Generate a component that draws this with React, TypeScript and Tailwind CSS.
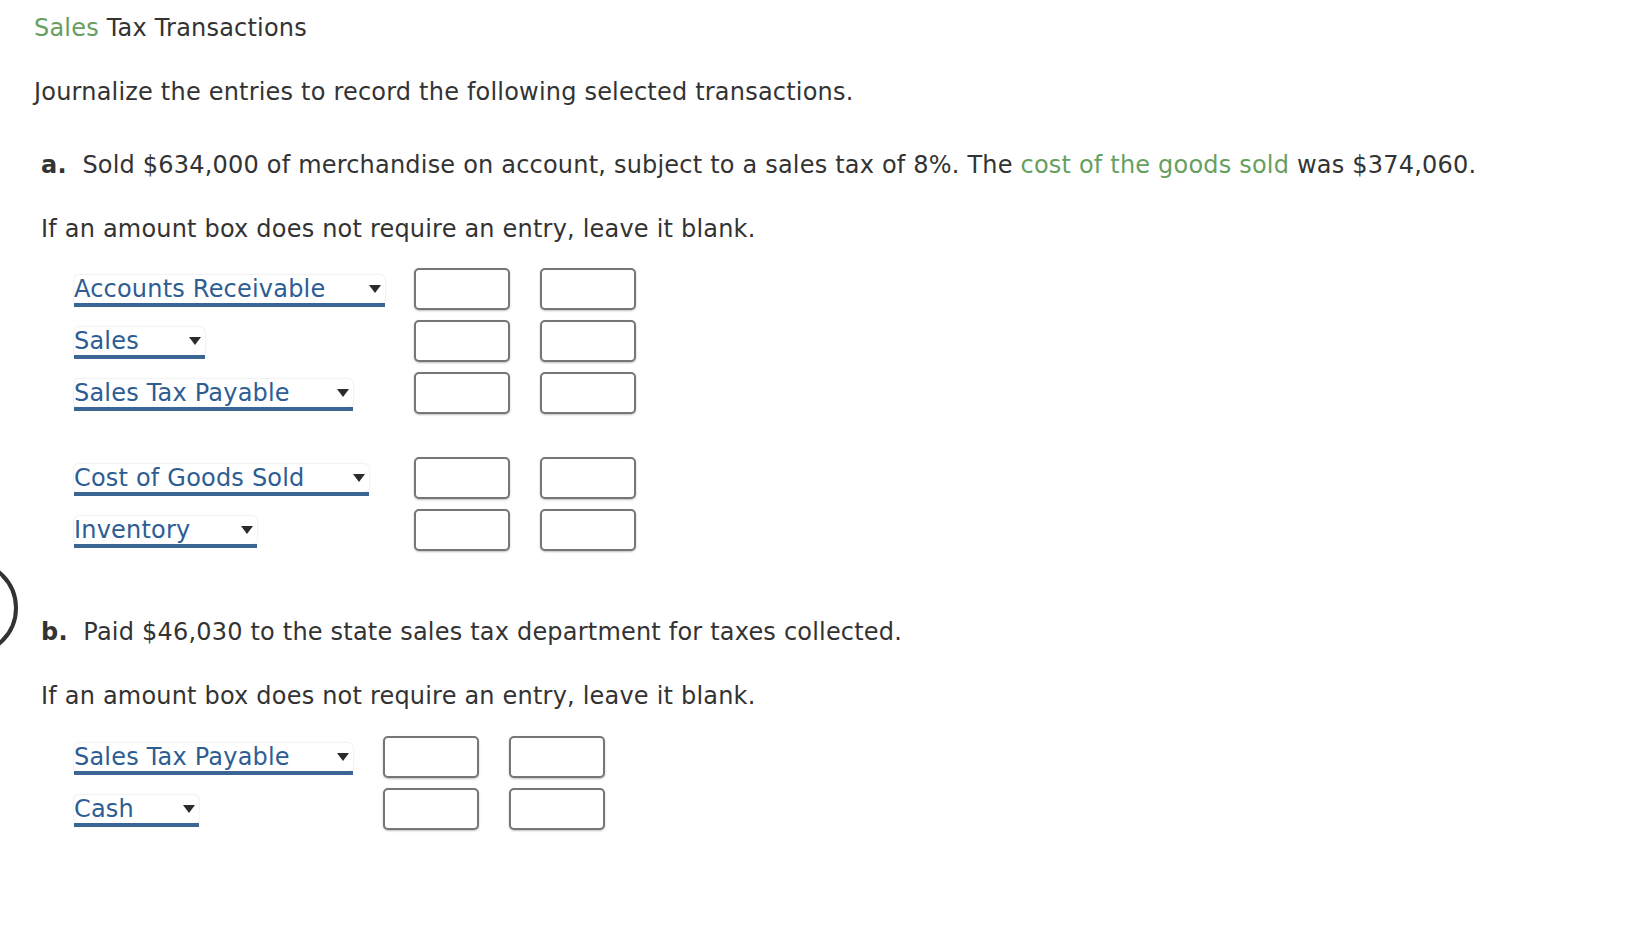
import React from "react";

const font = { fontFamily: '"DejaVu Sans", Verdana, sans-serif' };

function AccountSelect({ label, width }: { label: string; width: number }) {
  return (
    <div className="relative flex flex-col" style={{ width }}>
      <div className="flex h-[28px] items-center justify-between rounded-[5px] bg-white pr-[4px] shadow-[0_0_2px_rgba(0,0,0,0.18)]">
        <span className="text-[24px] leading-[28px] text-[#2d5d93]">{label}</span>
        <span className="h-0 w-0 border-x-[6px] border-t-[8px] border-x-transparent border-t-[#2b2b2b]" />
      </div>
      <div className="h-[4px] w-full bg-[#3a6594]" />
    </div>
  );
}

function AmountBox() {
  return (
    <input
      type="text"
      className="h-[42px] w-[96px] rounded-[5px] border-2 border-[#767676] bg-white shadow-[0_1px_2px_rgba(0,0,0,0.25)] outline-none"
    />
  );
}

function EntryRow({ label, width, col }: { label: string; width: number; col: number }) {
  return (
    <div className="flex items-end">
      <div className="pb-[3px]" style={{ width: col }}>
        <AccountSelect label={label} width={width} />
      </div>
      <div className="flex gap-[30px]">
        <AmountBox />
        <AmountBox />
      </div>
    </div>
  );
}

export default function App() {
  return (
    <div className="relative min-h-[936px] w-full overflow-hidden bg-white text-[#333] tracking-[0.2px]" style={font}>
      <div className="absolute left-[-78px] top-[560px] h-[96px] w-[96px] rounded-full border-4 border-[#333]" />

      <div className="pl-[34px] pt-[14px]">
        <h1 className="text-[24px] leading-[28px] font-normal">
          <span className="text-[#679f5f]">Sales</span> Tax Transactions
        </h1>
        <p className="mt-[36px] text-[24px] leading-[28px]">
          Journalize the entries to record the following selected transactions.
        </p>
      </div>

      <div className="pl-[41px]">
        <p className="mt-[45px] text-[24px] leading-[28px]">
          <b>a.</b>&nbsp; Sold $634,000 of merchandise on account, subject to a sales tax of 8%. The{" "}
          <span className="text-[#679f5f]">cost of the goods sold</span> was $374,060.
        </p>
        <p className="mt-[36px] text-[24px] leading-[28px]">
          If an amount box does not require an entry, leave it blank.
        </p>

        <div className="mt-[25px] flex flex-col gap-[10px] pl-[33px]">
          <EntryRow label="Accounts Receivable" width={311} col={340} />
          <EntryRow label="Sales" width={131} col={340} />
          <EntryRow label="Sales Tax Payable" width={279} col={340} />
          <div className="mt-[33px]">
            <EntryRow label="Cost of Goods Sold" width={295} col={340} />
          </div>
          <EntryRow label="Inventory" width={183} col={340} />
        </div>

        <p className="mt-[67px] text-[24px] leading-[28px]">
          <b>b.</b>&nbsp; Paid $46,030 to the state sales tax department for taxes collected.
        </p>
        <p className="mt-[36px] text-[24px] leading-[28px]">
          If an amount box does not require an entry, leave it blank.
        </p>

        <div className="mt-[26px] flex flex-col gap-[10px] pl-[33px]">
          <EntryRow label="Sales Tax Payable" width={279} col={309} />
          <EntryRow label="Cash" width={125} col={309} />
        </div>
      </div>
    </div>
  );
}
